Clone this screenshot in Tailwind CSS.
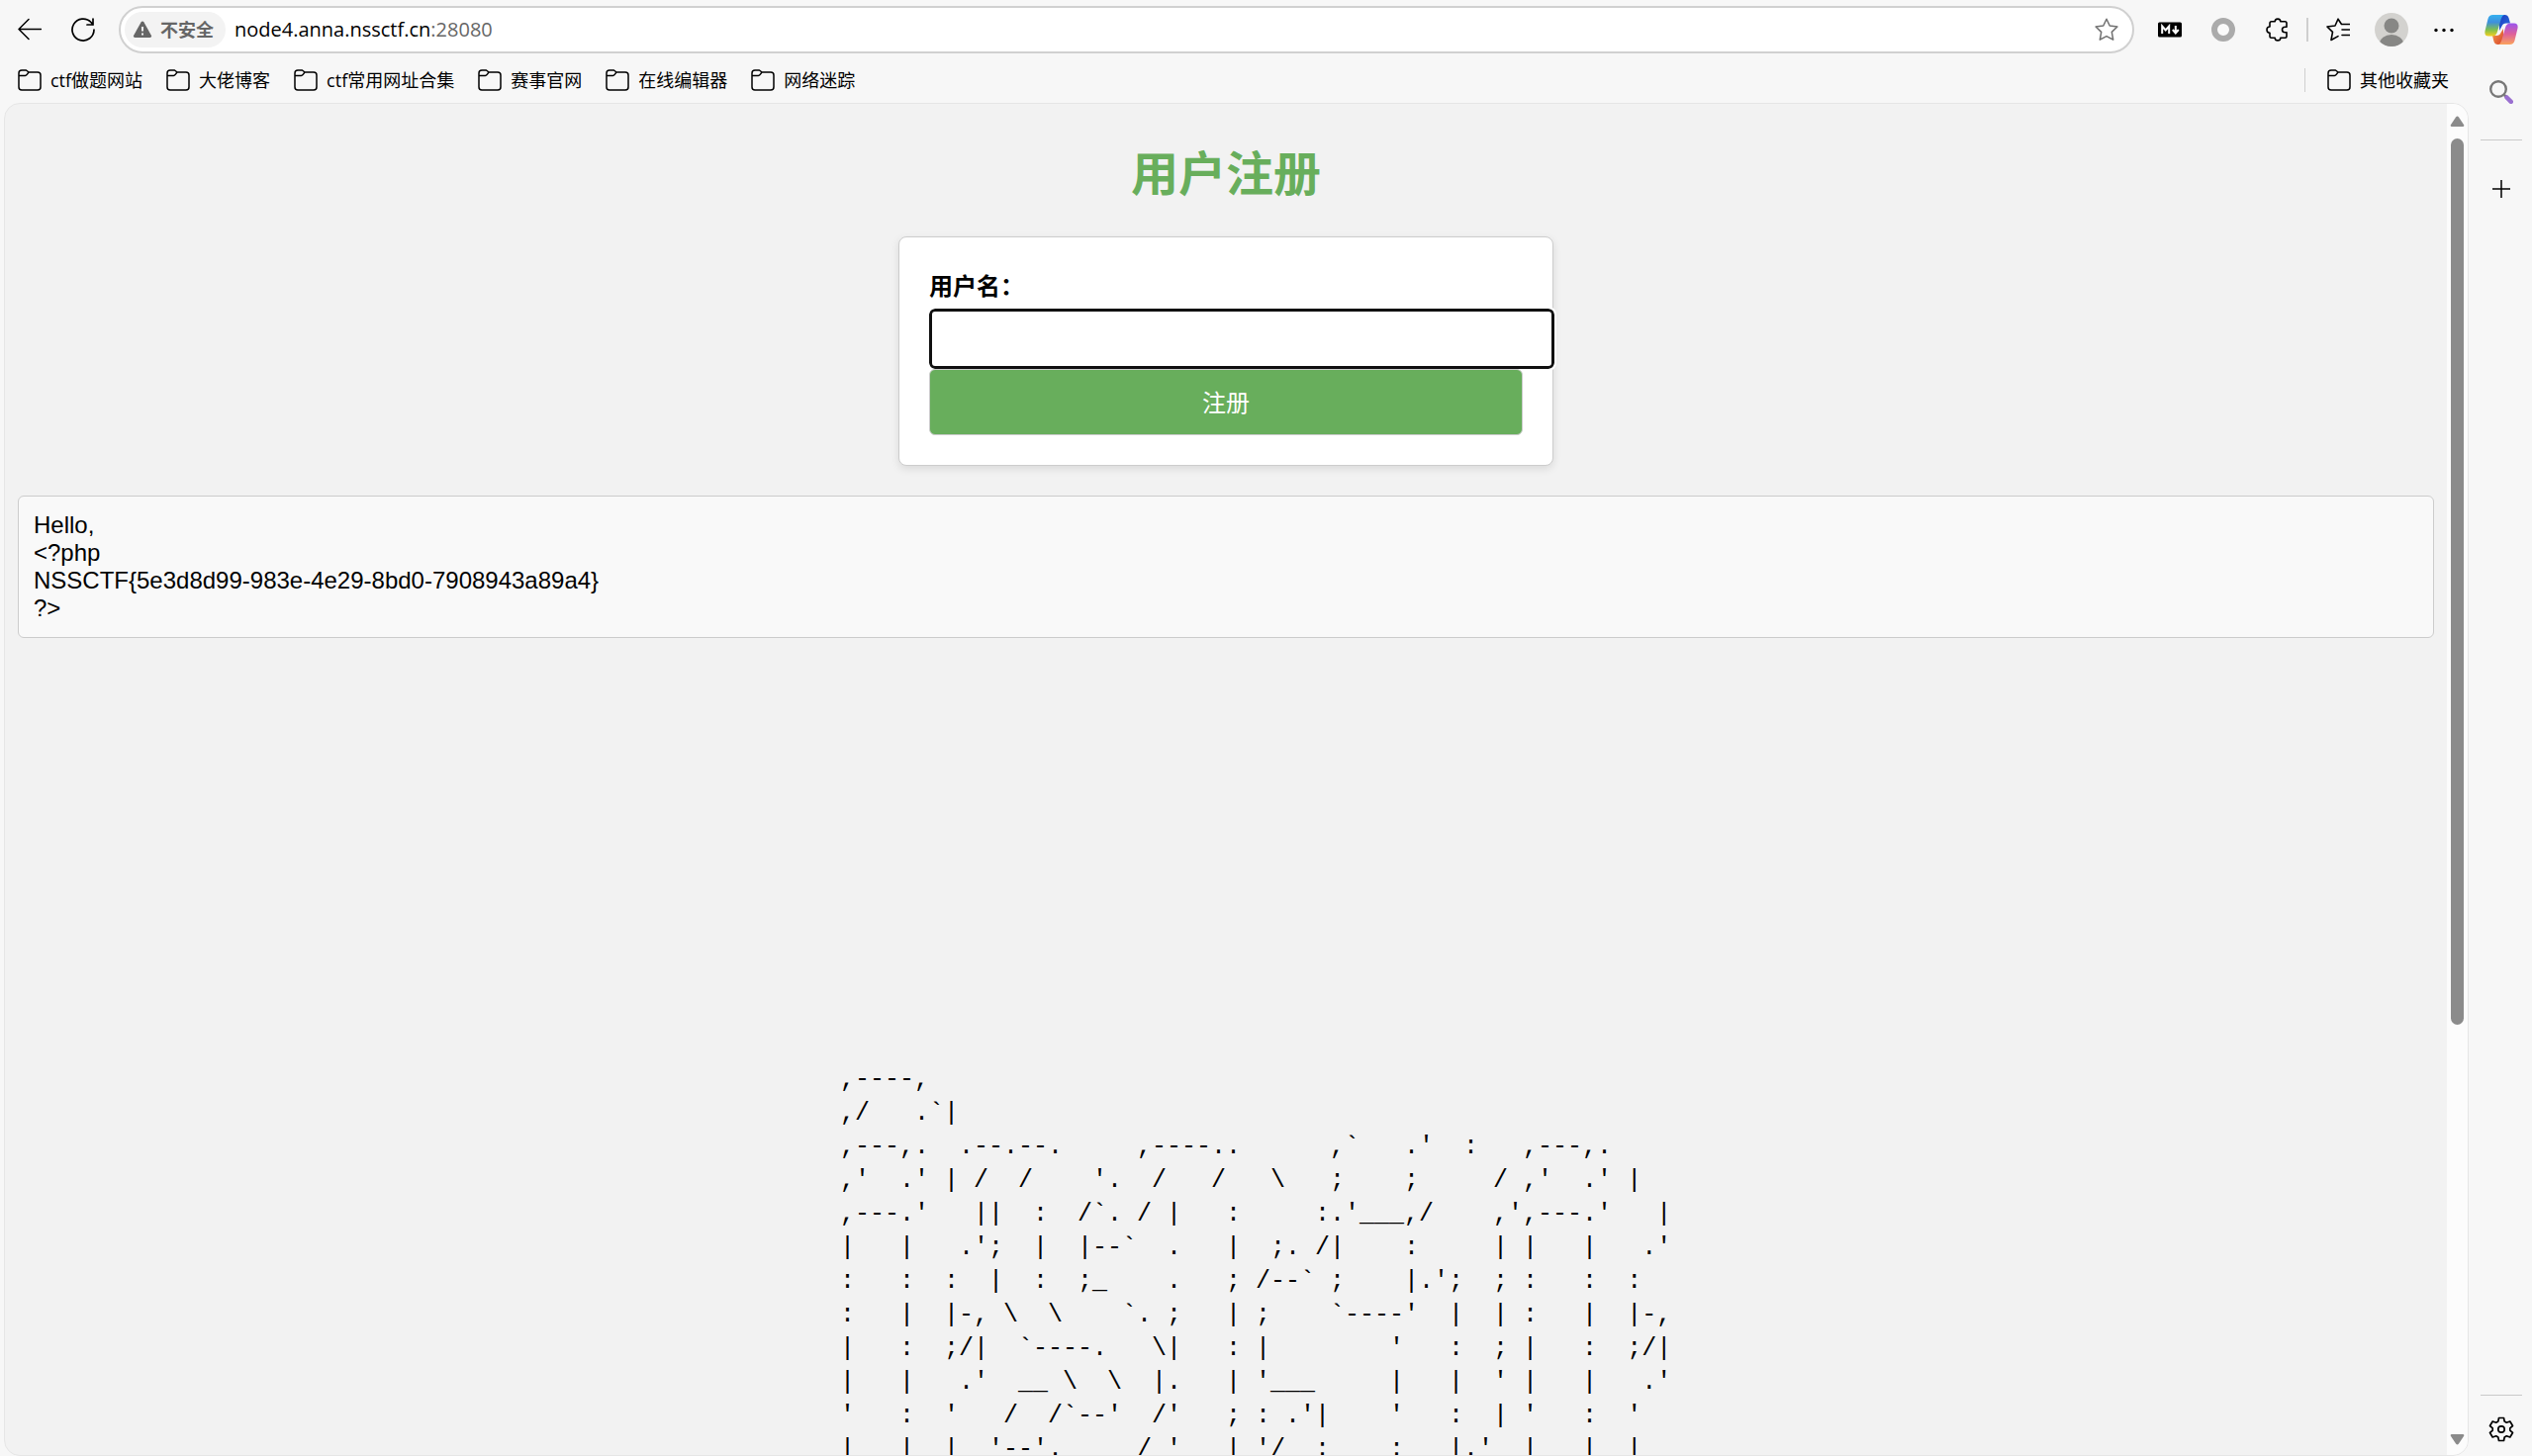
<!DOCTYPE html>
<html lang="zh-CN">

<head>
    <meta charset="UTF-8" />
    <meta name="viewport" content="width=device-width, initial-scale=1.0" />
    <title>用户注册</title>
    <script src="https://cdn.jsdelivr.net/npm/@tailwindcss/browser@4"></script>
</head>

<body class="h-screen overflow-hidden flex bg-[#f7f7f7] text-black font-['Open_Sans','Noto_Sans_CJK_SC',sans-serif]">

    <!-- Shared icon shapes -->
    <svg class="hidden" aria-hidden="true">
        <symbol id="folder" viewBox="0 0 24 24">
            <path d="M1 5A3 3 0 0 1 4 2H8.500L11 4H20A3 3 0 0 1 23 7V19A3 3 0 0 1 20 22H4A3 3 0 0 1 1 19ZM1.500 7.500H7.500C9 7.500 9.500 6 11 4" fill="none" stroke="currentColor" stroke-width="1.500" stroke-linejoin="round" />
        </symbol>
    </svg>

    <div class="flex-1 min-w-0 flex flex-col">

        <!-- Toolbar -->
        <header class="h-[60px] shrink-0 flex items-center pl-[18px] pr-[14px]">
            <button aria-label="后退" class="mr-[30px]">
                <svg class="size-6" viewBox="0 0 24 24" fill="none" stroke="currentColor" stroke-width="1.500" stroke-linecap="round" stroke-linejoin="round">
                    <path d="M23.500 11.500H1M11 1.500L1 11.500L11 21.500" />
                </svg>
            </button>
            <button aria-label="刷新" class="mr-6">
                <svg class="size-6" viewBox="0 0 24 24" fill="none" stroke="currentColor" stroke-width="1.700" stroke-linecap="round" stroke-linejoin="round">
                    <path d="M23 12A11 11 0 1 1 20 4.500L22 7M22 1V7H16" />
                </svg>
            </button>
            <div class="flex-1 h-12 flex items-center bg-white border-2 border-[#d0d0d0] rounded-full pl-1 pr-[14px]">
                <button class="h-9 flex items-center gap-2 bg-[#f3f3f3] rounded-full pl-2 pr-3 mr-[9px] text-lg font-bold text-[#666]">
                    <svg class="w-5 h-[18px]" viewBox="0 0 20 18">
                        <path d="M8.500 1.500Q10 -.5 11.500 1.500L19 15Q19.700 17 17.500 17H2.500Q.3 17 1 15Z" fill="#666" />
                        <path d="M10 6V10.500M10 12.500V14.500" stroke="#fff" stroke-width="1.800" />
                    </svg>
                    不安全
                </button>
                <div role="textbox" contenteditable="true" aria-label="地址" class="flex-1 text-xl">node4.anna.nssctf.cn<span class="text-[#666]">:28080</span></div>
                <button aria-label="收藏此页">
                    <svg class="size-6" viewBox="0 0 24 24" fill="none" stroke="#707070" stroke-width="1.500" stroke-linejoin="round">
                        <path d="M12 1.200L15.200 8L22.900 9L17.300 14.400L18.700 22.200L12 18.600L5.300 22.200L6.700 14.400L1.100 9L8.800 8Z" />
                    </svg>
                </button>
            </div>
            <button aria-label="Markdown" class="ml-6 mr-[30px]">
                <svg class="size-6" viewBox="0 0 24 24">
                    <rect y="4.500" width="24" height="15" rx="1.500" />
                    <path d="M4.200 16V8.500L7.700 12.500L11.200 8.500V16M17.800 8V14M14.800 12L17.800 15.500L20.800 12" fill="none" stroke="#fff" stroke-width="2" />
                </svg>
            </button>
            <button aria-label="扩展程序" class="mr-[30px]">
                <svg class="size-6" viewBox="0 0 24 24">
                    <circle cx="12" cy="12" r="9" fill="#fafafa" stroke="#ababab" stroke-width="6" />
                </svg>
            </button>
            <button aria-label="扩展" class="mr-[18px]">
                <svg class="size-6" viewBox="0 0 24 24" fill="none" stroke="currentColor" stroke-width="1.600" stroke-linejoin="round">
                    <path d="M5 5.500Q5 3.800 6.700 3.800H10.200C10.200 .2 15.800 .2 15.800 3.800H20.300Q22 3.800 22 5.500V9.300H20.500C16.500 9.300 16.500 14.700 20.500 14.700H22V18.500Q22 20.200 20.300 20.200H15.800C15.800 23.800 10.200 23.800 10.200 20.200H6.700Q5 20.200 5 18.500V15.200C1 15.200 1 9 5 9Z" />
                </svg>
            </button>
            <div class="w-[2px] h-6 bg-[#cfcfcf] mr-[18px]"></div>
            <button aria-label="收藏夹" class="mr-[25px]">
                <svg class="size-6" viewBox="0 0 24 24" fill="none" stroke="currentColor" stroke-width="1.600" stroke-linejoin="round" stroke-linecap="round">
                    <path d="M17 6.500H15.500L12 1.200L9 8L1 9L6.500 14.400L5 22.500L12 18.600M15.500 6.500H23.500M16 12H23.500M16 17.500H23.500" />
                </svg>
            </button>
            <button aria-label="个人资料" class="mr-[25px]">
                <svg class="size-[34px]" viewBox="0 0 34 34">
                    <clipPath id="avatar"><circle cx="17" cy="17" r="17" /></clipPath>
                    <g clip-path="url(#avatar)">
                        <rect width="34" height="34" fill="#d3d2cf" />
                        <circle cx="17" cy="13" r="7.500" fill="#878785" />
                        <ellipse cx="17" cy="31" rx="12" ry="9" fill="#878785" />
                    </g>
                </svg>
            </button>
            <button aria-label="设置及其他">
                <svg class="w-[22px] h-6" viewBox="0 0 22 24">
                    <circle cx="3" cy="12.500" r="1.700" /><circle cx="11" cy="12.500" r="1.700" /><circle cx="19" cy="12.500" r="1.700" />
                </svg>
            </button>
        </header>

        <!-- Bookmarks bar -->
        <nav class="h-11 shrink-0 flex items-center gap-6 pl-[18px] pr-5 pb-[2px] text-lg">
            <a href="#" class="flex items-center gap-[9px]"><svg class="size-6"><use href="#folder" /></svg>ctf做题网站</a>
            <a href="#" class="flex items-center gap-[9px]"><svg class="size-6"><use href="#folder" /></svg>大佬博客</a>
            <a href="#" class="flex items-center gap-[9px]"><svg class="size-6"><use href="#folder" /></svg>ctf常用网址合集</a>
            <a href="#" class="flex items-center gap-[9px]"><svg class="size-6"><use href="#folder" /></svg>赛事官网</a>
            <a href="#" class="flex items-center gap-[9px]"><svg class="size-6"><use href="#folder" /></svg>在线编辑器</a>
            <a href="#" class="flex items-center gap-[9px]"><svg class="size-6"><use href="#folder" /></svg>网络迷踪</a>
            <div class="ml-auto flex items-center gap-[22px]">
                <div class="w-px h-6 bg-[#cfcfcf]"></div>
                <a href="#" class="flex items-center gap-[9px]"><svg class="size-6"><use href="#folder" /></svg>其他收藏夹</a>
            </div>
        </nav>

        <!-- Page -->
        <div class="flex-1 min-h-0 ml-1 flex bg-[#f2f2f2] border border-[#e6e6e6] rounded-2xl overflow-hidden">
            <main class="flex-1 min-w-0 overflow-hidden px-[13px] pt-9 font-['Liberation_Sans','Noto_Sans_CJK_SC',sans-serif]">
                <h1 class="mb-[26px] text-center text-5xl leading-[72px] font-bold text-[#68ae5c]">用户注册</h1>

                <form class="w-[662px] mx-auto mb-[30px] p-[30px] bg-white border border-[#ccc] rounded-lg shadow-[0_3px_8px_rgba(0,0,0,0.1)]">
                    <label for="username" class="block mb-[2px] text-2xl leading-10 font-bold">用户名：</label>
                    <input id="username" name="username" type="text"
                        class="relative block w-[632px] h-[61px] px-4 text-2xl bg-white border-3 border-[#101010] rounded-md outline-2 outline-white" />
                    <button type="submit"
                        class="relative block w-full h-[67px] pt-[2px] text-2xl text-white bg-[#68ae5c] border border-[#ccc] rounded-md">注册</button>
                </form>

                <div class="mb-[430px] p-[15px] text-2xl leading-7 bg-[#f9f9f9] border border-[#ccc] rounded-md">
                    <p>Hello,</p>
                    <p>&lt;?php</p>
                    <p>NSSCTF{5e3d8d99-983e-4e29-8bd0-7908943a89a4}</p>
                    <p>?&gt;</p>
                </div>

                <!-- Banner -->
                <pre class="w-[780px] mx-auto text-[25px] leading-[34px] font-['Liberation_Mono',monospace]">,----,
,/   .`|
,---,.  .--.--.     ,----..      ,`   .'  :   ,---,.
,'  .' | /  /    '.  /   /   \   ;    ;     / ,'  .' |
,---.'   ||  :  /`. / |   :     :.'___,/    ,',---.'   |
|   |   .';  |  |--`  .   |  ;. /|    :     | |   |   .'
:   :  :  |  :  ;_    .   ; /--` ;    |.';  ; :   :  :
:   |  |-, \  \    `. ;   | ;    `----'  |  | :   |  |-,
|   :  ;/|  `----.   \|   : |        '   :  ; |   :  ;/|
|   |   .'  __ \  \  |.   | '___     |   |  ' |   |   .'
'   :  '   /  /`--'  /'   ; : .'|    '   :  | '   :  '
|   |  |  '--'.     / '   | '/  :    :   |.'  |   |  |</pre>
            </main>

            <!-- Scrollbar -->
            <div class="w-[21px] shrink-0 flex flex-col items-center bg-[#fcfcfc] pt-3 pb-[10px]">
                <svg class="w-[15px] h-3" viewBox="0 0 14 12"><path d="M5.500 1.500Q7 -.5 8.500 1.500L13.500 9Q14.500 11 12.500 11H1.500Q-.5 11 .5 9Z" fill="#8b8b8b" /></svg>
                <div class="flex-1 min-h-0 w-[13px] my-[11px]">
                    <div class="h-[69%] bg-[#8b8b8b] rounded-full"></div>
                </div>
                <svg class="w-[15px] h-3 rotate-180" viewBox="0 0 14 12"><path d="M5.500 1.500Q7 -.5 8.500 1.500L13.500 9Q14.500 11 12.500 11H1.500Q-.5 11 .5 9Z" fill="#8b8b8b" /></svg>
            </div>
        </div>
    </div>

    <!-- Sidebar -->
    <aside class="w-16 shrink-0 flex flex-col items-center pl-[2px] pt-[13px] pb-[14px]">
        <button aria-label="Copilot" class="mb-[34px]">
            <svg class="size-[34px]" viewBox="0 0 34 34">
                <defs>
                    <linearGradient id="cpLeft" x1="0" y1="0" x2="0" y2="1">
                        <stop offset="0" stop-color="#35b1f0" />
                        <stop offset=".35" stop-color="#3e8fdc" />
                        <stop offset=".7" stop-color="#7fc04f" />
                        <stop offset="1" stop-color="#f3cf1f" />
                    </linearGradient>
                    <linearGradient id="cpRight" x1="0" y1="0" x2="0" y2="1">
                        <stop offset="0" stop-color="#9a55ee" />
                        <stop offset=".5" stop-color="#dd5f9c" />
                        <stop offset="1" stop-color="#fba35c" />
                    </linearGradient>
                    <linearGradient id="cpTop" x1="0" y1="0" x2="1" y2="1">
                        <stop offset="0" stop-color="#1b3fc0" />
                        <stop offset="1" stop-color="#2a6fe0" />
                    </linearGradient>
                    <linearGradient id="cpBottom" x1="0" y1="0" x2="1" y2="1">
                        <stop offset="0" stop-color="#f5a04a" />
                        <stop offset="1" stop-color="#d8432c" />
                    </linearGradient>
                </defs>
                <path d="M15 2H20.500Q23.500 2 24.500 5L26 10.500H22Q18.500 10.500 17.500 13.500L15 18Z" fill="url(#cpTop)" />
                <path d="M19 32H13.500Q10.500 32 9.500 29L8 23H12Q15.500 23 16.500 20L19 16Z" fill="url(#cpBottom)" />
                <path d="M8.500 2H20Q17.800 2.500 16.800 6L13 19Q11.800 23.500 8 23.500H4Q-.5 23.500 .6 18L3.500 6Q4.500 2 8.500 2Z" fill="url(#cpLeft)" />
                <path d="M25.500 32H14Q16.200 31.500 17.200 28L21 15Q22.200 10.500 26 10.500H30Q34.500 10.500 33.400 16L30.500 28Q29.500 32 25.500 32Z" fill="url(#cpRight)" />
            </svg>
        </button>
        <button aria-label="搜索" class="mb-[36px]">
            <svg class="size-6" viewBox="0 0 24 24" fill="none">
                <path d="M15 15L18 18" stroke="#777" stroke-width="2.500" />
                <circle cx="9" cy="9" r="7.800" stroke="#777" stroke-width="2.400" />
                <path d="M17.500 17.500L21.800 21.800" stroke="#9a6fd0" stroke-width="4.500" stroke-linecap="round" />
            </svg>
        </button>
        <div class="w-[42px] h-px bg-[#cacaca] mb-10"></div>
        <button aria-label="自定义">
            <svg class="size-[18px]" viewBox="0 0 18 18" stroke="currentColor" stroke-width="1.500"><path d="M9 0V18M0 9H18" /></svg>
        </button>
        <div class="w-[42px] h-px bg-[#cacaca] mt-auto mb-[21px]"></div>
        <button aria-label="设置">
            <svg class="size-[26px]" viewBox="0 0 26 26" fill="none" stroke="currentColor" stroke-width="1.700" stroke-linejoin="round">
                <path d="M10.500 1.500H15.500L16.200 5L18.300 6.200L21.800 5L24.500 9.500L21.800 11.800V14.200L24.500 16.500L21.800 21L18.300 19.800L16.200 21L15.500 24.500H10.500L9.800 21L7.700 19.800L4.200 21L1.500 16.500L4.200 14.200V11.800L1.500 9.500L4.200 5L7.700 6.200L9.800 5Z" />
                <circle cx="13" cy="13" r="3.200" />
            </svg>
        </button>
    </aside>
</body>

</html>
